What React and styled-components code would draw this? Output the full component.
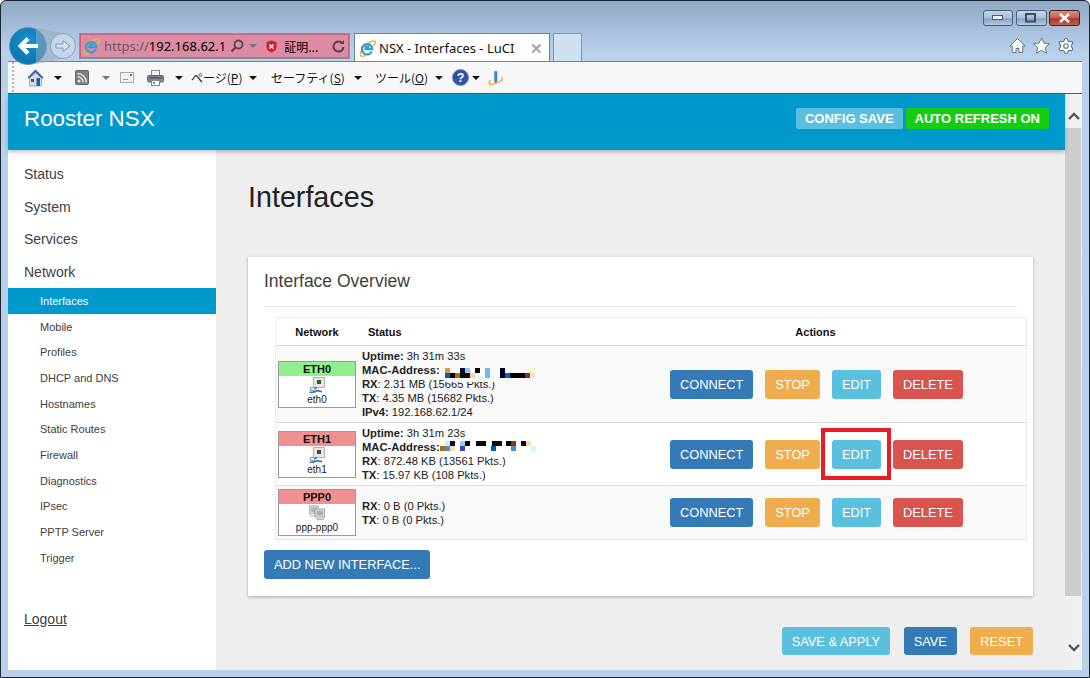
import styled, { createGlobalStyle } from "styled-components";
import { Settings } from "lucide-react";

const GlobalStyle = createGlobalStyle`
  html, body {
    margin: 0;
    padding: 0;
    overflow: hidden;
    font-family: "Liberation Sans", Arial, sans-serif;
  }
  * { box-sizing: border-box; }
`;

const BTN_COLORS = {
  primary: "#337ab7",
  warning: "#f0ad4e",
  info: "#5bc0de",
  danger: "#d9534f",
};

const Window = styled.div`
  width: 1090px;
  height: 678px;
  display: flex;
  flex-direction: column;
  background: linear-gradient(#8fa9c6 0, #b8d0ea 50px, #b9d1ea 100%);
  border: 1px solid #1c2733;
  border-radius: 6px 6px 0 0;
`;

const Chrome = styled.div`
  height: 60px;
  flex: none;
  display: flex;
  flex-direction: column;
`;

const ControlRow = styled.div`
  height: 32px;
  display: flex;
  justify-content: flex-end;
  gap: 2.5px;
  padding: 9px 9px 0 0;
`;

const WinBtn = styled.div`
  width: ${(p) => (p.$wide ? 31 : 30)}px;
  height: 16px;
  border: 1px solid ${(p) => (p.$close ? "#4a2024" : "#4d5d70")};
  border-radius: 3px;
  display: flex;
  align-items: center;
  justify-content: center;
  background: ${(p) =>
    p.$close
      ? "linear-gradient(#d9907f, #c15f4e 50%, #a83a2a 55%, #c4604e)"
      : "linear-gradient(#c3d4e8, #a9c0da 50%, #83a2c2 55%, #b5cae2)"};
`;

const NavRow = styled.div`
  height: 28px;
  display: flex;
  align-items: flex-start;
  padding-left: 8px;
`;

const BackBtn = styled.div`
  position: relative;
  z-index: 2;
  width: 38px;
  height: 38px;
  margin-top: -6px;
  border-radius: 50%;
  background: radial-gradient(circle at 50% 35%, #1b93cf, #0678b4 70%, #0a679c);
  border: 1px solid #6f8fac;
  display: flex;
  align-items: center;
  justify-content: center;
  flex: none;

  &::after {
    content: "";
    position: absolute;
    left: 26px;
    top: 0;
    width: 34px;
    height: 36px;
    z-index: -1;
    background: rgba(150, 170, 195, 0.55);
    clip-path: polygon(0 0, 100% 18%, 100% 82%, 0 100%);
  }
`;

const ForwardBtn = styled.div`
  position: relative;
  z-index: 3;
  width: 26px;
  height: 26px;
  margin-left: 3px;
  border-radius: 50%;
  border: 1px solid #8ea2b8;
  background: #c4d6ea;
  display: flex;
  align-items: center;
  justify-content: center;
  flex: none;
`;

const AddressBar = styled.div`
  width: 271px;
  height: 26px;
  margin-left: 3px;
  flex: none;
  display: flex;
  align-items: center;
  padding-left: 2px;
  background: #dc8ba3;
  border: 2px solid #c8627f;
  outline: 1px solid #8b93a3;
  outline-offset: -1px;
  font-family: "Noto Sans", sans-serif;
  font-size: 13px;
  color: #000;
`;

const UrlPrefix = styled.span`
  color: #6c5a62;
  margin-left: 4px;
`;

const CertText = styled.span`
  font-family: "Noto Sans CJK JP", sans-serif;
  font-size: 12px;
  width: 37px;
  margin-left: 7px;
  flex: none;
`;

const Tab = styled.div`
  width: 196px;
  height: 29px;
  margin-left: 4px;
  flex: none;
  display: flex;
  align-items: center;
  padding: 0 3px 0 4px;
  background: #fff;
  border: 1px solid #6f84a0;
  border-bottom: none;
  font-family: "Noto Sans", sans-serif;
  font-size: 13px;
  color: #111;
`;

const TabTitle = styled.span`
  margin-left: 3px;
  flex: 1;
  white-space: nowrap;
`;

const TabClose = styled.span`
  color: #a2a6ac;
  font-size: 15px;
  font-weight: 700;
  margin-right: 3px;
  margin-top: -1px;
`;

const NewTab = styled.div`
  width: 29px;
  height: 28px;
  margin-left: 3px;
  flex: none;
  background: #cfe0f3;
  border: 1px solid #7f94ae;
  border-bottom: none;
`;

const RightIcons = styled.div`
  margin-left: auto;
  margin-top: 4px;
  display: flex;
  gap: 7px;
  padding-right: 14px;
`;

const Toolbar = styled.div`
  height: 33px;
  margin: 0 7px;
  flex: none;
  display: flex;
  align-items: center;
  background: #f7f7f7;
  border-top: 1px solid #6f84a0;
  border-bottom: 1px solid #4f5a68;
  font-family: "Noto Sans CJK JP", sans-serif;
  font-size: 12px;
  color: #111;
  position: relative;
  z-index: 1;
`;

const Grip = styled.div`
  width: 2px;
  height: 100%;
  margin: 0 13px 0 4px;
  background: repeating-linear-gradient(#b5b5b5 0 2px, transparent 2px 4px);
`;

const Caret = styled.span`
  width: 0;
  height: 0;
  flex: none;
  margin-left: ${(p) => p.$ml ?? 4}px;
  border-left: 4px solid transparent;
  border-right: 4px solid transparent;
  border-top: 4px solid ${(p) => (p.$muted ? "#777" : "#111")};
`;

const MenuText = styled.span`
  white-space: nowrap;
  width: ${(p) => p.$w}px;
  margin-left: ${(p) => p.$ml}px;
  flex: none;
  u { text-underline-offset: 1px; }
`;

const ToolIcon = styled.span`
  display: inline-flex;
  flex: none;
  margin-left: ${(p) => p.$ml ?? 0}px;
`;

const PageWrap = styled.div`
  height: 576px;
  margin: 0 7px;
  flex: none;
  display: flex;
`;

const Page = styled.div`
  flex: 1;
  min-width: 0;
  display: flex;
  flex-direction: column;
  background: #eee;
`;

const Header = styled.header`
  height: 56px;
  flex: none;
  display: flex;
  align-items: center;
  justify-content: space-between;
  padding: 0 16px 7px;
  background: #0099cc;
  box-shadow: 0 2px 4px rgba(0, 0, 0, 0.25);
  position: relative;
  z-index: 1;
`;

const Brand = styled.div`
  font-size: 22.4px;
  color: #fff;
`;

const HeaderBtns = styled.div`
  display: flex;
  gap: 3px;
`;

const HeaderBtn = styled.div`
  height: 21px;
  padding: 0 9px;
  display: flex;
  align-items: center;
  border-radius: 2px;
  font-size: 13px;
  font-weight: 700;
  color: #fff;
  background: ${(p) => p.$bg};
`;

const Body = styled.div`
  flex: 1;
  display: flex;
  min-height: 0;
`;

const Sidebar = styled.nav`
  width: 208px;
  flex: none;
  padding-top: 8px;
  background: #fff;
  color: #404040;
`;

const MainItem = styled.div`
  height: 32.5px;
  padding-left: 16px;
  font-size: 14px;
  display: flex;
  align-items: center;
`;

const SubItem = styled.div`
  height: 25.7px;
  padding-left: 32px;
  font-size: 11px;
  display: flex;
  align-items: center;
  color: ${(p) => (p.$active ? "#fff" : "#404040")};
  background: ${(p) => (p.$active ? "#0099cc" : "transparent")};
`;

const Logout = styled.div`
  margin: 40px 0 0 16px;
  font-size: 14px;
  text-decoration: underline;
`;

const Main = styled.main`
  flex: 1;
  min-width: 0;
  padding: 30px 32px 0;
  overflow: hidden;
`;

const PageTitle = styled.h1`
  margin: 0 0 43px;
  font-size: 28.7px;
  font-weight: 400;
  line-height: 34px;
  color: #222;
`;

const Card = styled.section`
  height: 339px;
  padding: 12px 16px 0;
  background: #fff;
  box-shadow: 0 1px 3px rgba(0, 0, 0, 0.3);
`;

const CardTitle = styled.h2`
  margin: 0;
  padding-bottom: 13px;
  font-size: 17.5px;
  line-height: 24px;
  font-weight: 400;
  color: #404040;
  border-bottom: 1px solid #e8e8e8;
`;

const Table = styled.div`
  margin: 10px -10px 0 11px;
  border: 1px solid #eee;
  border-bottom-color: #e4e4e4;
  font-size: 11.2px;
  color: #222;
`;

const HeadRow = styled.div`
  height: 27px;
  display: flex;
  align-items: center;
  font-size: 11px;
  font-weight: 700;
  color: #111;
`;

const HeadCell = styled.div`
  width: ${(p) => p.$w}px;
  flex: ${(p) => (p.$grow ? 1 : "none")};
  padding-left: ${(p) => p.$pl ?? 0}px;
  text-align: ${(p) => p.$align ?? "left"};
`;

const Row = styled.div`
  display: flex;
  align-items: center;
  padding: 3px 0;
  background: ${(p) => (p.$odd ? "#f9f9f9" : "#fff")};
  border-top: 1px solid #ddd;
`;

const NetCell = styled.div`
  width: 86px;
  padding-left: 2px;
  flex: none;
`;

const Badge = styled.div`
  width: 78px;
  height: 47px;
  border: 1px solid #9a9a9a;
  background: #fff;
  display: flex;
  flex-direction: column;
  align-items: center;
  font-size: 10px;
`;

const BadgeHead = styled.div`
  width: 100%;
  height: 14px;
  flex: none;
  line-height: 14px;
  text-align: center;
  font-size: 11px;
  font-weight: 700;
  color: #111;
  background: ${(p) => (p.$up ? "#90f090" : "#f09090")};
`;

const BadgeIcon = styled.div`
  height: 17px;
  margin-top: 1px;
  display: flex;
`;

const BadgeName = styled.div`
  line-height: 11px;
`;

const StatusCell = styled.div`
  width: 308px;
  flex: none;
  line-height: 14px;
`;

const StatusLine = styled.div`
  height: 14px;
  white-space: nowrap;
  b { font-weight: 700; }
`;

const Censor = styled.span`
  position: relative;
  display: inline-block;
  vertical-align: top;
  width: 0;
  height: 14px;

  svg {
    position: absolute;
    left: 0;
    top: 0;
    display: block;
  }
`;

const Actions = styled.div`
  display: flex;
  gap: 12px;
`;

const Btn = styled.div`
  position: relative;
  height: ${(p) => p.$h ?? 29}px;
  padding: 0 10px;
  display: flex;
  align-items: center;
  border-radius: 3px;
  font-size: 12.8px;
  color: #fff;
  background: ${(p) => BTN_COLORS[p.$kind]};
  white-space: nowrap;

  ${(p) =>
    p.$marked &&
    `&::after {
      content: "";
      position: absolute;
      inset: -12px -10px -11px -11px;
      border: 4px solid #ed1c24;
    }`}
`;

const AddBtn = styled(Btn)`
  display: inline-flex;
  margin-top: 10px;
`;

const FormActions = styled.div`
  margin-top: 31px;
  display: flex;
  justify-content: flex-end;
  gap: 13.5px;
`;

const Scrollbar = styled.div`
  width: 17px;
  flex: none;
  display: flex;
  flex-direction: column;
  background: #f0f0f0;
`;

const ScrollEnd = styled.div`
  height: ${(p) => p.$h}px;
  flex: ${(p) => (p.$grow ? 1 : "none")};
  display: flex;
  justify-content: center;
  align-items: ${(p) => (p.$grow ? "flex-end" : "flex-start")};
  padding: ${(p) => (p.$grow ? "0 0 18px" : "18px 0 0")};
`;

const Thumb = styled.div`
  height: 468px;
  flex: none;
  margin-right: 1px;
  background: #cdcdcd;
`;

const IeLogo = ({ size = 17 }) => (
  <svg width={size} height={size} viewBox="0 0 17 17" style={{ flex: "none" }}>
    <path d="M2 15.5C.5 14 2.500 8 7 4.500S15 .2 16 1.500c.8 1-.2 3-1.500 4.500" fill="none" stroke="#e8b83a" strokeWidth="1.500" />
    <path d="M12.800 11.500a5.200 5.200 0 1 1-.1-4.700c.3.800.4 1.600.4 2.400H5.400M6 6.800h4.300" fill="none" stroke="#3c9ad8" strokeWidth="2.300" />
    <path d="M1.500 15.500c1 1.200 3.500.7 5.500-.4" fill="none" stroke="#e8b83a" strokeWidth="1.200" />
  </svg>
);

const HomeColor = () => (
  <svg width="17" height="18" viewBox="0 0 17 18">
    <path d="M8.500 .8 .8 8.500l1.200 1L8.500 3.300 15 9.500l1.200-1z" fill="#3f62ad" stroke="#294a90" strokeWidth=".5" />
    <path d="M2.500 9.500 8.500 4l6 5.500V17h-12z" fill="#d9dee6" stroke="#8c96a3" strokeWidth=".7" />
    <rect x="4" y="10" width="3" height="3" fill="#44566b" />
    <rect x="9.500" y="9" width="3.500" height="8" fill="#1f5fa8" />
  </svg>
);

const RssIcon = () => (
  <svg width="14" height="15" viewBox="0 0 14 15">
    <rect x=".5" y=".5" width="13" height="14" rx="1.500" fill="#7d7d7d" stroke="#666" />
    <circle cx="4" cy="11" r="1.500" fill="#e4e4e4" />
    <path d="M2.500 6.800a5.700 5.700 0 0 1 5.700 5.700M2.500 3.600a8.900 8.900 0 0 1 8.900 8.900" fill="none" stroke="#e4e4e4" strokeWidth="1.500" />
  </svg>
);

const MailIcon = () => (
  <svg width="14" height="11" viewBox="0 0 14 11">
    <rect x=".5" y=".5" width="13" height="10" fill="#f0f0f0" stroke="#a8a8a8" />
    <path d="M3 7.500h5" stroke="#9a9a9a" />
    <rect x="10" y="2" width="2" height="2" fill="#d8484c" />
  </svg>
);

const PrinterIcon = () => (
  <svg width="17" height="16" viewBox="0 0 17 16">
    <rect x="4.500" y=".5" width="8" height="6" fill="#f4f4f4" stroke="#8a8a8a" />
    <rect x=".5" y="5.500" width="16" height="6.500" rx="1.500" fill="#7f8a96" stroke="#5d6670" />
    <rect x="2" y="7" width="13" height="1.500" fill="#4c555f" />
    <rect x="4.500" y="10.500" width="8" height="5" fill="#fff" stroke="#8a8a8a" />
    <rect x="6" y="12" width="2" height="2" fill="#3c9ad8" />
  </svg>
);

const HelpIcon = () => (
  <svg width="17" height="17" viewBox="0 0 17 17">
    <circle cx="8.500" cy="8.500" r="8" fill="#2c55a8" stroke="#7d8aa0" />
    <text x="8.500" y="13" textAnchor="middle" fontFamily="Liberation Sans" fontWeight="700" fontSize="12.500" fill="#fff">?</text>
  </svg>
);

const PenIcon = () => (
  <svg width="16" height="17" viewBox="0 0 16 17">
    <path d="M13 8c3 2 1 4-2 5s-7 2-8 3M3 11c-3 2-2 4 0 5" fill="none" stroke="#eeb14a" strokeWidth="1.500" />
    <path d="M6.500 2.500h2.500V12l-1.200 2-1.300-2z" fill="#3c8bd0" stroke="#2a6fb0" strokeWidth=".5" />
  </svg>
);

const NavIcon = ({ d, color }) => (
  <svg width="17" height="17" viewBox="0 0 17 17" fill={color} stroke="#66778a" strokeWidth="1">
    <path d={d} />
  </svg>
);

const BackArrow = () => (
  <svg width="22" height="18" viewBox="0 0 22 18" fill="none" stroke="#fff" strokeWidth="4">
    <path d="M21 9H4M11 1.500 3.500 9l7.500 7.500" />
  </svg>
);

const ForwardArrow = () => (
  <svg width="16" height="14" viewBox="0 0 16 14" fill="#d8e4f2" stroke="#8296ac" strokeWidth="1">
    <path d="M1 5h7V1.500L15 7l-7 5.500V9H1z" />
  </svg>
);

const SearchIcon = () => (
  <svg width="14" height="14" viewBox="0 0 14 14" fill="none" stroke="#5b4149" strokeWidth="1.800" style={{ flex: "none", marginLeft: 4 }}>
    <circle cx="8.500" cy="5.500" r="4" />
    <path d="M5.500 8.500 1.500 12.500" strokeWidth="2.200" />
  </svg>
);

const CertIcon = () => (
  <svg width="11" height="13" viewBox="0 0 11 13" style={{ flex: "none", marginLeft: 9 }}>
    <path d="M5.500 .5 10.500 2v5c0 3-3 5-5 5.500C3.500 12 .5 10 .5 7V2z" fill="#d81e2c" />
    <path d="m3.500 4.500 4 4m0-4-4 4" stroke="#fff" strokeWidth="1.500" />
  </svg>
);

const RefreshIcon = () => (
  <svg width="13" height="13" viewBox="0 0 13 13" fill="none" stroke="#5b4149" strokeWidth="2" style={{ flex: "none", marginLeft: 11 }}>
    <path d="M10.500 3.500a5 5 0 1 0 1 3.500" />
    <path d="M8 4h4V0z" fill="#5b4149" stroke="none" />
  </svg>
);

const EthIcon = () => (
  <svg width="16" height="16" viewBox="0 0 16 16">
    <rect x="4.500" y=".5" width="11" height="10" fill="#e8e8e8" stroke="#b4b4b4" />
    <rect x="8" y="3" width="4" height="4" fill="#4a4a38" />
    <path d="M8 10.500 5 12M.5 15.500c3.500 0 5.500-.8 7.500-1.800l5 1" fill="none" stroke="#3f76bd" strokeWidth="1.700" />
    <rect x="1.500" y="10.500" width="4" height="3" fill="#fff" stroke="#6f8bb2" strokeWidth=".8" />
  </svg>
);

const PppIcon = () => (
  <svg width="16" height="16" viewBox="0 0 20 19">
    <rect x=".5" y=".5" width="11" height="10" fill="#d8d8d8" stroke="#a8a8a8" />
    <rect x="2.500" y="2.500" width="7" height="6" fill="#b5b5b5" />
    <rect x="1" y="12" width="8" height="2" fill="#d0d0d0" />
    <rect x="7.500" y="4.500" width="12" height="10" fill="#e4e4e4" stroke="#8e8e8e" />
    <rect x="9.500" y="6.500" width="8" height="6" fill="#a8acaf" />
    <rect x="9" y="16" width="10" height="2.500" fill="#bdbdbd" />
  </svg>
);

const Chevron = ({ up }) => (
  <svg width="12" height="8" viewBox="0 0 12 8" fill="none" stroke="#555" strokeWidth="2.400">
    <path d={up ? "M1 7l5-5 5 5" : "M1 1l5 5 5-5"} />
  </svg>
);

// censored MAC address blocks: x, row, colour (5px cells)
const CENSOR_ETH0 = [
  [0, 0, "#d99a3c"], [15, 0, "#001030"], [20, 0, "#8fc8f0"], [30, 0, "#000"], [40, 0, "#6fb8f5"], [55, 0, "#000030"], [85, 0, "#fff8c0"],
  [0, 1, "#0060b0"], [5, 1, "#000"], [10, 1, "#b06a10"], [15, 1, "#000"], [20, 1, "#300"], [25, 1, "#ffd8a0"], [30, 1, "#dff"], [40, 1, "#6fb8f5"],
  [55, 1, "#003"], [60, 1, "#0068b8"], [65, 1, "#000"], [70, 1, "#000"], [75, 1, "#000"], [80, 1, "#8a3030"], [85, 1, "#ffe0c8"],
];

const CENSOR_ETH1 = [
  [0, 0, "#ffffd0"], [5, 0, "#c0f0ff"], [10, 0, "#000050"], [20, 0, "#8fd0f5"], [25, 0, "#000"], [36, 0, "#000"], [41, 0, "#000"], [52, 0, "#000"], [57, 0, "#300"],
  [66, 0, "#000"], [71, 0, "#8a3a00"], [81, 0, "#000"], [86, 0, "#ffd8a0"],
  [0, 1, "#b06a10"], [5, 1, "#4090d8"], [10, 1, "#ffe0a0"], [20, 1, "#404098"], [51, 1, "#0060b0"], [71, 1, "#4090d8"], [91, 1, "#c0ffff"],
];

const CensorBlocks = ({ cells, top, left = 0, cover }) => (
  <Censor>
    <svg width="100" height="22" viewBox="0 0 100 22">
      {cover && <rect x={left} y={top} width="92" height="14" fill={cover} />}
      {cells.map(([x, row, color], i) => (
        <rect key={i} x={x + left} y={row * 5 + top} width="5" height="5" fill={color} />
      ))}
    </svg>
  </Censor>
);

const RowActions = ({ marked }) => (
  <Actions>
    <Btn $kind="primary">CONNECT</Btn>
    <Btn $kind="warning">STOP</Btn>
    <Btn $kind="info" $marked={marked}>EDIT</Btn>
    <Btn $kind="danger">DELETE</Btn>
  </Actions>
);

const SUB_ITEMS = [
  "Interfaces", "Mobile", "Profiles", "DHCP and DNS", "Hostnames", "Static Routes",
  "Firewall", "Diagnostics", "IPsec", "PPTP Server", "Trigger",
];

const App = () => (
  <Window>
    <GlobalStyle />
    <Chrome>
      <ControlRow>
        <WinBtn>
          <svg width="12" height="6" viewBox="0 0 12 6"><rect x=".5" y=".5" width="10" height="4" fill="#eef3f8" stroke="#4d5d70" /></svg>
        </WinBtn>
        <WinBtn $wide>
          <svg width="12" height="10" viewBox="0 0 12 10"><rect x="1" y="1" width="9" height="7.500" fill="none" stroke="#3f4c5c" strokeWidth="2" /></svg>
        </WinBtn>
        <WinBtn $wide $close>
          <svg width="13" height="10" viewBox="0 0 13 10"><path d="M2 1l9 8m0-8-9 8" stroke="#fff" strokeWidth="2.400" /></svg>
        </WinBtn>
      </ControlRow>
      <NavRow>
        <BackBtn><BackArrow /></BackBtn>
        <ForwardBtn><ForwardArrow /></ForwardBtn>
        <AddressBar>
          <IeLogo />
          <UrlPrefix>https://</UrlPrefix>
          <span>192.168.62.1</span>
          <SearchIcon />
          <Caret $muted $ml={5} />
          <CertIcon />
          <CertText>証明...</CertText>
          <RefreshIcon />
        </AddressBar>
        <Tab>
          <IeLogo />
          <TabTitle>NSX - Interfaces - LuCI</TabTitle>
          <TabClose>✕</TabClose>
        </Tab>
        <NewTab />
        <RightIcons>
          <NavIcon color="#fff" d="M8.500 1.500.8 9h2.500v6.500h3.700v-4h3v4h3.700V9h2.500z" />
          <NavIcon color="#fff" d="m8.500 .8 2.400 5.300 5.600.6-4.200 3.800 1.200 5.700-5-2.900-5 2.900 1.200-5.700L.5 6.700l5.600-.6z" />
          <Settings size={18} color="#66778a" fill="#fff" strokeWidth={1.600} />
        </RightIcons>
      </NavRow>
    </Chrome>
    <Toolbar>
      <Grip />
      <ToolIcon><HomeColor /></ToolIcon>
      <Caret $ml={10} />
      <ToolIcon $ml={13}><RssIcon /></ToolIcon>
      <Caret $muted $ml={13} />
      <ToolIcon $ml={10}><MailIcon /></ToolIcon>
      <ToolIcon $ml={13}><PrinterIcon /></ToolIcon>
      <Caret $ml={11} />
      <MenuText $w={54} $ml={8}>ページ(<u>P</u>)</MenuText>
      <Caret $ml={4} />
      <MenuText $w={80} $ml={14}>セーフティ(<u>S</u>)</MenuText>
      <Caret $ml={3} />
      <MenuText $w={56} $ml={13}>ツール(<u>O</u>)</MenuText>
      <Caret $ml={4} />
      <ToolIcon $ml={9}><HelpIcon /></ToolIcon>
      <Caret $ml={3} />
      <ToolIcon $ml={8}><PenIcon /></ToolIcon>
    </Toolbar>
    <PageWrap>
      <Page>
        <Header>
          <Brand>Rooster NSX</Brand>
          <HeaderBtns>
            <HeaderBtn $bg="#5bc0de">CONFIG SAVE</HeaderBtn>
            <HeaderBtn $bg="#14cc14">AUTO REFRESH ON</HeaderBtn>
          </HeaderBtns>
        </Header>
        <Body>
          <Sidebar>
            <MainItem>Status</MainItem>
            <MainItem>System</MainItem>
            <MainItem>Services</MainItem>
            <MainItem>Network</MainItem>
            {SUB_ITEMS.map((name, i) => (
              <SubItem key={name} $active={i === 0}>{name}</SubItem>
            ))}
            <Logout>Logout</Logout>
          </Sidebar>
          <Main>
            <PageTitle>Interfaces</PageTitle>
            <Card>
              <CardTitle>Interface Overview</CardTitle>
              <Table>
                <HeadRow>
                  <HeadCell $w={82} $align="center">Network</HeadCell>
                  <HeadCell $w={247} $pl={10}>Status</HeadCell>
                  <HeadCell $grow $align="center">Actions</HeadCell>
                </HeadRow>
                <Row $odd>
                  <NetCell>
                    <Badge>
                      <BadgeHead $up>ETH0</BadgeHead>
                      <BadgeIcon><EthIcon /></BadgeIcon>
                      <BadgeName>eth0</BadgeName>
                    </Badge>
                  </NetCell>
                  <StatusCell>
                    <StatusLine><b>Uptime:</b> 3h 31m 33s</StatusLine>
                    <StatusLine>
                      <b>MAC-Address:</b>&nbsp;<CensorBlocks cells={CENSOR_ETH0} top={5} left={2} cover="#f9f9f9" />
                    </StatusLine>
                    <StatusLine><b>RX</b>: 2.31 MB (15665 Pkts.)</StatusLine>
                    <StatusLine><b>TX</b>: 4.35 MB (15682 Pkts.)</StatusLine>
                    <StatusLine><b>IPv4:</b> 192.168.62.1/24</StatusLine>
                  </StatusCell>
                  <RowActions />
                </Row>
                <Row>
                  <NetCell>
                    <Badge>
                      <BadgeHead>ETH1</BadgeHead>
                      <BadgeIcon><EthIcon /></BadgeIcon>
                      <BadgeName>eth1</BadgeName>
                    </Badge>
                  </NetCell>
                  <StatusCell>
                    <StatusLine><b>Uptime:</b> 3h 31m 23s</StatusLine>
                    <StatusLine>
                      <b>MAC-Address:</b><CensorBlocks cells={CENSOR_ETH1} top={1} />
                    </StatusLine>
                    <StatusLine><b>RX</b>: 872.48 KB (13561 Pkts.)</StatusLine>
                    <StatusLine><b>TX</b>: 15.97 KB (108 Pkts.)</StatusLine>
                  </StatusCell>
                  <RowActions marked />
                </Row>
                <Row $odd>
                  <NetCell>
                    <Badge>
                      <BadgeHead>PPP0</BadgeHead>
                      <BadgeIcon><PppIcon /></BadgeIcon>
                      <BadgeName>ppp-ppp0</BadgeName>
                    </Badge>
                  </NetCell>
                  <StatusCell>
                    <StatusLine><b>RX</b>: 0 B (0 Pkts.)</StatusLine>
                    <StatusLine><b>TX</b>: 0 B (0 Pkts.)</StatusLine>
                  </StatusCell>
                  <RowActions />
                </Row>
              </Table>
              <AddBtn $kind="primary">ADD NEW INTERFACE...</AddBtn>
            </Card>
            <FormActions>
              <Btn $kind="info" $h={28}>SAVE &amp; APPLY</Btn>
              <Btn $kind="primary" $h={28}>SAVE</Btn>
              <Btn $kind="warning" $h={28}>RESET</Btn>
            </FormActions>
          </Main>
        </Body>
      </Page>
      <Scrollbar>
        <ScrollEnd $h={34}><Chevron up /></ScrollEnd>
        <Thumb />
        <ScrollEnd $grow><Chevron /></ScrollEnd>
      </Scrollbar>
    </PageWrap>
  </Window>
);

export default App;
